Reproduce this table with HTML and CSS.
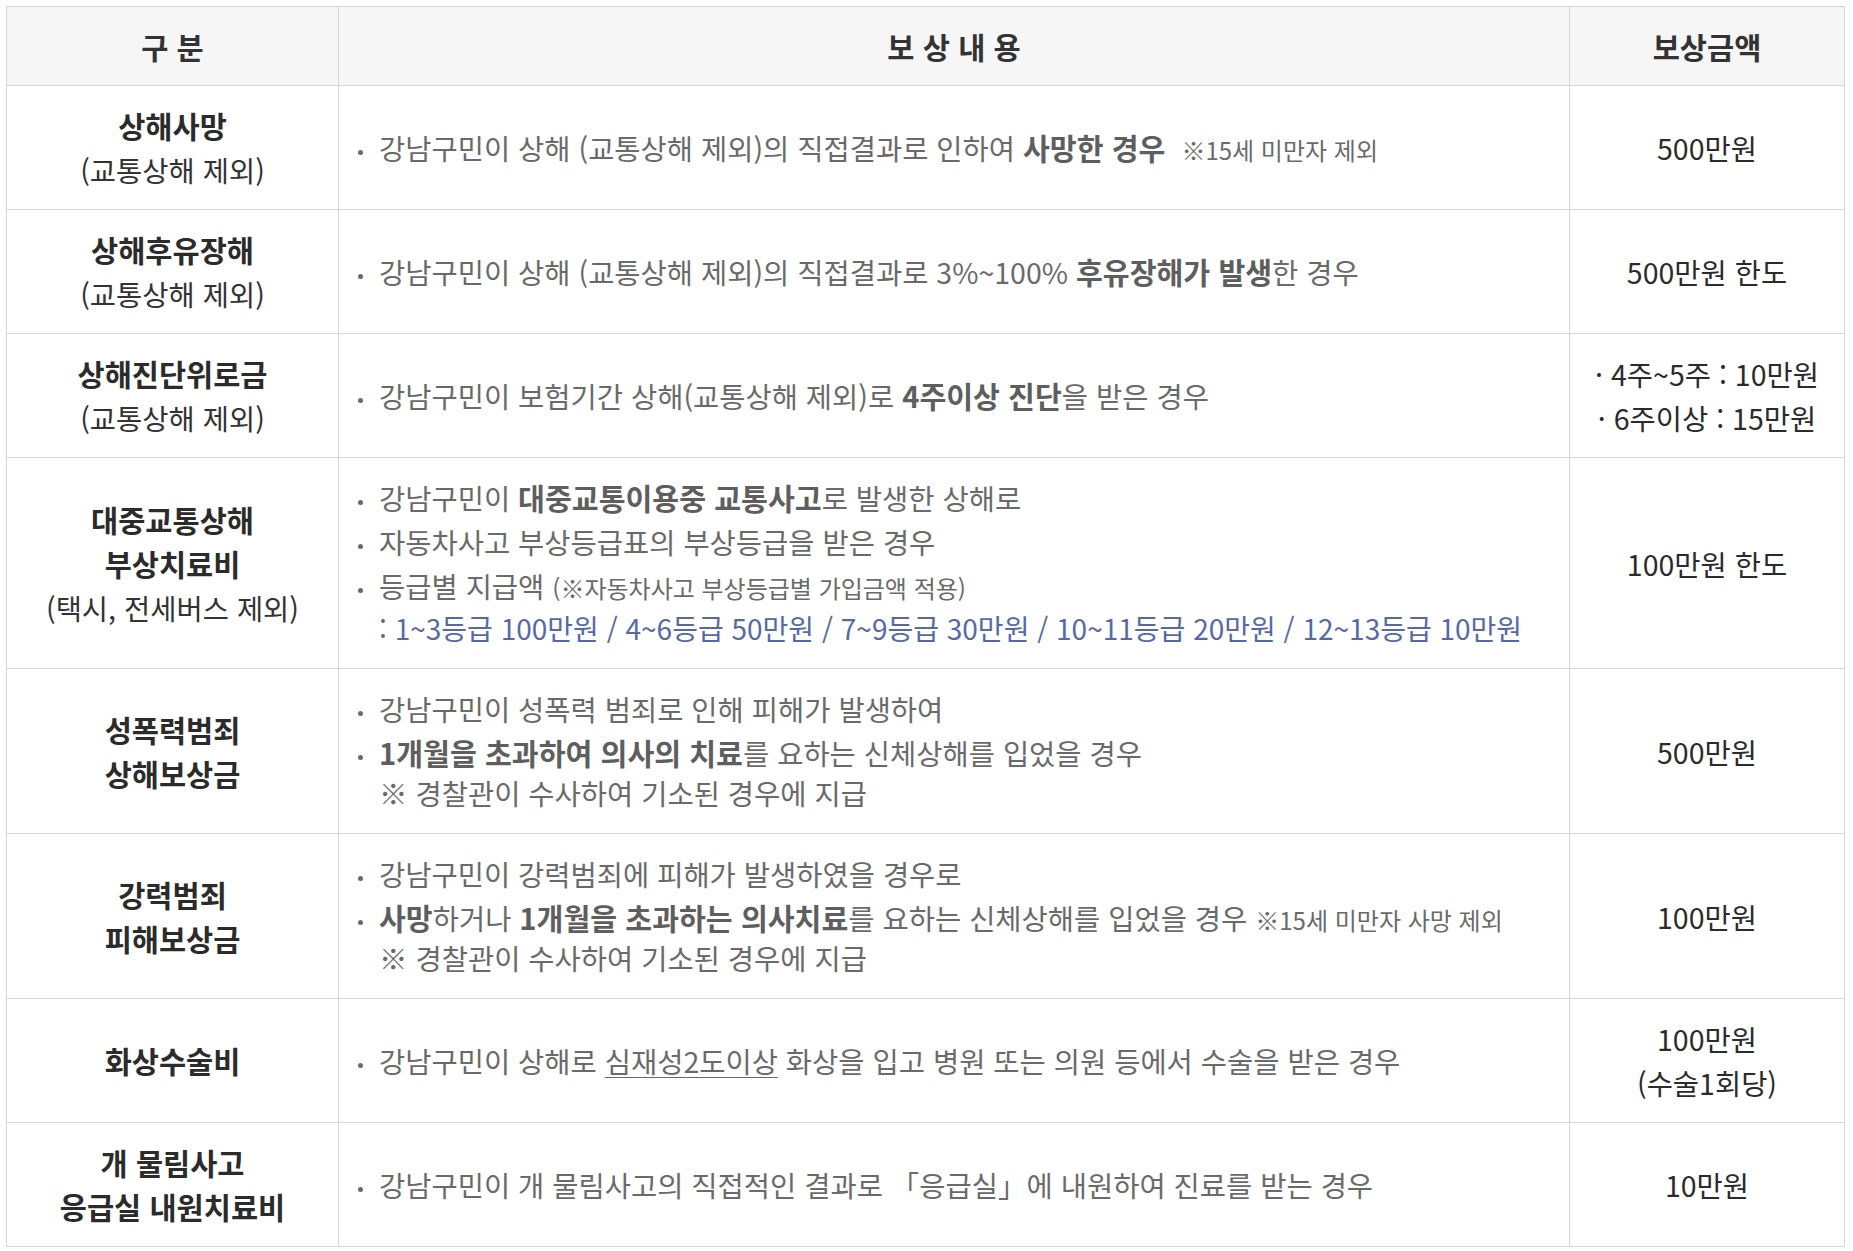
FILE: index.html
```html
<!DOCTYPE html>
<html lang="ko">
<head>
<meta charset="utf-8">
<title>보상내용</title>
<link rel="stylesheet" href="styles.css">
</head>
<body>
<div class="wrap">
<table class="comp">
  <colgroup>
    <col class="c1">
    <col class="c2">
    <col class="c3">
  </colgroup>
  <thead>
    <tr>
      <th>구 분</th>
      <th>보 상 내 용</th>
      <th>보상금액</th>
    </tr>
  </thead>
  <tbody>
    <tr>
      <td class="cat"><strong>상해사망</strong><br>(교통상해 제외)</td>
      <td class="desc">
        <ul class="list">
          <li>강남구민이 상해 (교통상해 제외)의 직접결과로 인하여 <b>사망한 경우</b> <small class="gap">※15세 미만자 제외</small></li>
        </ul>
      </td>
      <td class="amt">500만원</td>
    </tr>
    <tr>
      <td class="cat"><strong>상해후유장해</strong><br>(교통상해 제외)</td>
      <td class="desc">
        <ul class="list">
          <li>강남구민이 상해 (교통상해 제외)의 직접결과로 3%~100% <b>후유장해가 발생</b>한 경우</li>
        </ul>
      </td>
      <td class="amt">500만원 한도</td>
    </tr>
    <tr>
      <td class="cat"><strong>상해진단위로금</strong><br>(교통상해 제외)</td>
      <td class="desc">
        <ul class="list">
          <li>강남구민이 보험기간 상해(교통상해 제외)로 <b>4주이상 진단</b>을 받은 경우</li>
        </ul>
      </td>
      <td class="amt">· 4주~5주 : 10만원<br>· 6주이상 : 15만원</td>
    </tr>
    <tr>
      <td class="cat"><strong>대중교통상해<br>부상치료비</strong><br>(택시, 전세버스 제외)</td>
      <td class="desc">
        <ul class="list">
          <li>강남구민이 <b>대중교통이용중 교통사고</b>로 발생한 상해로</li>
          <li>자동차사고 부상등급표의 부상등급을 받은 경우</li>
          <li>등급별 지급액 <small>(※자동차사고 부상등급별 가입금액 적용)</small></li>
        </ul>
        <p class="grade">: 1~3등급 100만원 / 4~6등급 50만원 / 7~9등급 30만원 / 10~11등급 20만원 / 12~13등급 10만원</p>
      </td>
      <td class="amt">100만원 한도</td>
    </tr>
    <tr>
      <td class="cat"><strong>성폭력범죄<br>상해보상금</strong></td>
      <td class="desc">
        <ul class="list">
          <li>강남구민이 성폭력 범죄로 인해 피해가 발생하여</li>
          <li><b>1개월을 초과하여 의사의 치료</b>를 요하는 신체상해를 입었을 경우</li>
        </ul>
        <p class="note">※ 경찰관이 수사하여 기소된 경우에 지급</p>
      </td>
      <td class="amt">500만원</td>
    </tr>
    <tr>
      <td class="cat"><strong>강력범죄<br>피해보상금</strong></td>
      <td class="desc">
        <ul class="list">
          <li>강남구민이 강력범죄에 피해가 발생하였을 경우로</li>
          <li><b>사망</b>하거나 <b>1개월을 초과하는 의사치료</b>를 요하는 신체상해를 입었을 경우 <small>※15세 미만자 사망 제외</small></li>
        </ul>
        <p class="note">※ 경찰관이 수사하여 기소된 경우에 지급</p>
      </td>
      <td class="amt">100만원</td>
    </tr>
    <tr>
      <td class="cat"><strong>화상수술비</strong></td>
      <td class="desc">
        <ul class="list">
          <li>강남구민이 상해로 <u>심재성2도이상</u> 화상을 입고 병원 또는 의원 등에서 수술을 받은 경우</li>
        </ul>
      </td>
      <td class="amt">100만원<br>(수술1회당)</td>
    </tr>
    <tr>
      <td class="cat"><strong>개 물림사고<br>응급실 내원치료비</strong></td>
      <td class="desc">
        <ul class="list">
          <li>강남구민이 개 물림사고의 직접적인 결과로 「응급실」에 내원하여 진료를 받는 경우</li>
        </ul>
      </td>
      <td class="amt">10만원</td>
    </tr>
  </tbody>
</table>
</div>
</body>
</html>
```
FILE: styles.css
```css
html, body {
  margin: 0;
  padding: 0;
  background: #ffffff;
}

body {
  font-family: "Noto Sans CJK KR", "Noto Sans", sans-serif;
  font-size: 28.5px;
  color: #333333;
}

.wrap {
  padding: 6px 9px 0 6px;
}

.comp {
  width: 1838px;
  border-collapse: collapse;
  table-layout: fixed;
}

.c1 { width: 332px; }
.c2 { width: 1231px; }
.c3 { width: 275px; }

.comp th,
.comp td {
  border: 1px solid #d6d6d6;
  line-height: 44px;
}

.comp th {
  background: #f6f6f6;
  font-weight: 700;
  font-size: 29.5px;
  color: #333333;
  padding: 17px 0;
  text-align: center;
}

.comp td {
  padding: 18px 18px 17px;
  vertical-align: middle;
}

.cat {
  text-align: center;
  color: #333333;
}

.comp td.cat {
  padding-left: 2px;
  padding-right: 2px;
}

.cat strong {
  font-weight: 700;
  font-size: 29.5px;
  line-height: 1;
  color: #2b2b2b;
}

.desc {
  color: #6a6a6a;
}

.desc b {
  font-weight: 700;
  font-size: 29.2px;
  line-height: 1;
  color: #5e5e5e;
}

.desc u {
  text-decoration: underline;
  text-underline-offset: 4px;
  text-decoration-thickness: 1px;
}

.desc small {
  font-size: 24px;
  line-height: 1;
}

.desc small.gap {
  margin-left: 8px;
}

.list {
  list-style: none;
  margin: 0;
  padding: 0;
}

.list li {
  position: relative;
  padding-left: 22px;
}

.list li::before {
  content: "";
  position: absolute;
  left: 1px;
  top: 24px;
  width: 5px;
  height: 5px;
  border-radius: 50%;
  background: #6a6a6a;
}

.grade {
  margin: 0 0 3px;
  padding-left: 22px;
  font-size: 28px;
  line-height: 40px;
  color: #5669a6;
}

.note {
  margin: 0 0 5px;
  padding-left: 22px;
  line-height: 36px;
}

.amt {
  text-align: center;
  color: #2b2b2b;
}
```
